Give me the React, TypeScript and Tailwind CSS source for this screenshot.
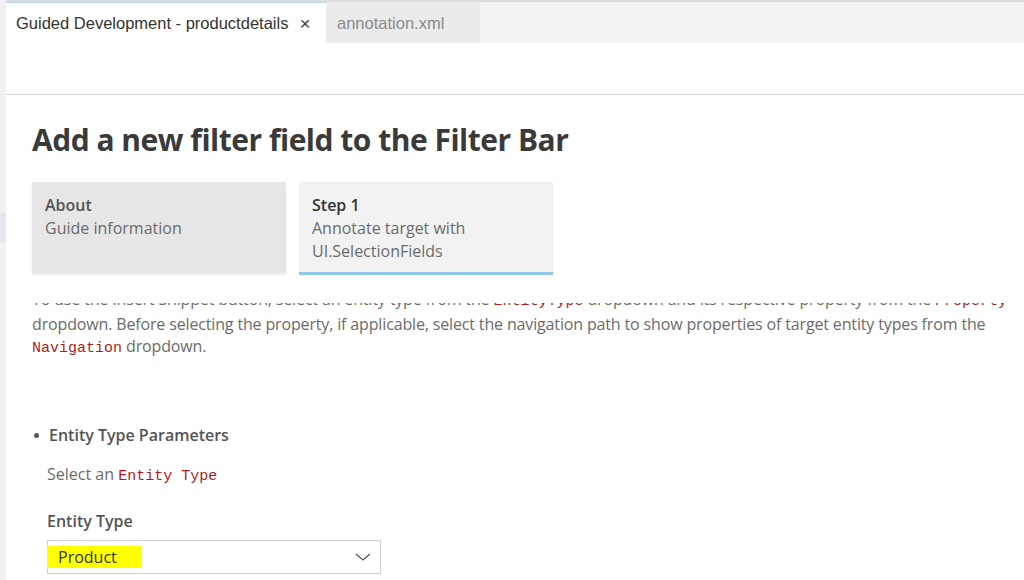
export default function App() {
  return (
    <div className="flex h-[580px] w-[1024px] overflow-hidden bg-white font-['Open_Sans',sans-serif]">
      {/* activity strip */}
      <div className="flex w-[6px] shrink-0 flex-col bg-[#f1f1f1]">
        <div className="h-[213px] shrink-0" />
        <div className="h-[29px] shrink-0 bg-[#e3e5f3]" />
      </div>

      <div className="flex min-w-0 flex-1 flex-col">
        {/* tab bar */}
        <div className="h-[2px] shrink-0 bg-[#dcdcdc]" />
        <div className="flex h-[41px] shrink-0 bg-[#f3f3f3] font-['Liberation_Sans',Arial,sans-serif] text-[16.5px]">
          <div className="flex w-[320px] items-center border-t border-[#b9d6ef] bg-white pl-[10px] pt-[1px] text-[#333]">
            <span>Guided Development - productdetails</span>
            <span className="ml-[11px] text-[19px] leading-none text-[#444]">×</span>
          </div>
          <div className="flex w-[154px] items-center bg-[#ebebeb] pl-[11px] pt-[1px] text-[#8a8a8a]">
            annotation.xml
          </div>
        </div>
        <div className="h-[52px] shrink-0 border-b border-[#d6d6d6]" />

        {/* page */}
        <div className="flex min-h-0 flex-1 flex-col overflow-hidden pl-[26px]">
          <h1 className="mt-[25px] shrink-0 text-[30px] font-bold leading-[40px] tracking-[-0.5px] text-[#3a3a3a]">
            Add a new filter field to the Filter Bar
          </h1>

          <div className="flex shrink-0 gap-[13px] bg-white pb-[28px] pt-[22px]">
            <div className="h-[91px] w-[254px] bg-[#e6e6e6] px-[13px] pt-[12px] text-[16px] leading-[23px] shadow-[0_2px_2px_rgba(0,0,0,0.08)]">
              <div className="font-semibold text-[#555]">About</div>
              <div className="text-[#6b6b6b]">Guide information</div>
            </div>
            <div className="h-[93px] w-[254px] border-b-[3px] border-[#93c5e6] bg-[#f2f2f2] px-[13px] pt-[12px] text-[16px] leading-[23px]">
              <div className="font-semibold text-[#333]">Step 1</div>
              <div className="text-[#6b6b6b]">Annotate target with</div>
              <div className="text-[#6b6b6b]">UI.SelectionFields</div>
            </div>
          </div>

          <div className="shrink-0 overflow-hidden">
            <p className="-mt-[15px] text-[16px] leading-[22px] tracking-[-0.15px] text-[#6b6b6b]">
              To use the Insert Snippet button, select an entity type from the{" "}
              <code className="font-['Liberation_Mono',monospace] text-[15px] tracking-normal text-[#b01c1c]">EntityType</code>{" "}
              dropdown and its respective property from the{" "}
              <code className="font-['Liberation_Mono',monospace] text-[15px] tracking-normal text-[#b01c1c]">Property</code>
              <br />
              dropdown. Before selecting the property, if applicable, select the navigation path to show properties of target entity types from the
              <br />
              <code className="font-['Liberation_Mono',monospace] text-[15px] tracking-normal text-[#b01c1c]">Navigation</code>{" "}
              dropdown.
            </p>

            <ul className="mt-[63px]">
              <li className="flex items-center gap-[10px] pl-[2px]">
                <span className="h-[5px] w-[5px] rounded-full bg-[#555]" />
                <span className="text-[16px] font-semibold text-[#555]">Entity Type Parameters</span>
              </li>
            </ul>

            <div className="mt-[16px] pl-[15px] text-[16px] leading-[22px] text-[#6b6b6b]">
              Select an{" "}
              <code className="font-['Liberation_Mono',monospace] text-[15px] text-[#b01c1c]">Entity Type</code>
            </div>

            <div className="mt-[21px] pl-[15px] text-[16px] font-semibold text-[#555]">Entity Type</div>

            <div className="ml-[15px] mt-[7px] flex h-[34px] w-[334px] items-center justify-between border border-[#cfcfcf] pr-[9px]">
              <span className="ml-[-1px] flex h-[22px] w-[95px] items-center bg-[#ffff00] pl-[11px] text-[16px] text-[#333]">
                Product
              </span>
              <svg width="16" height="10" viewBox="0 0 16 10" fill="none" stroke="#555" strokeWidth="1.3">
                <path d="M1 2l7 6 7-6" />
              </svg>
            </div>
          </div>
        </div>
      </div>
    </div>
  );
}
